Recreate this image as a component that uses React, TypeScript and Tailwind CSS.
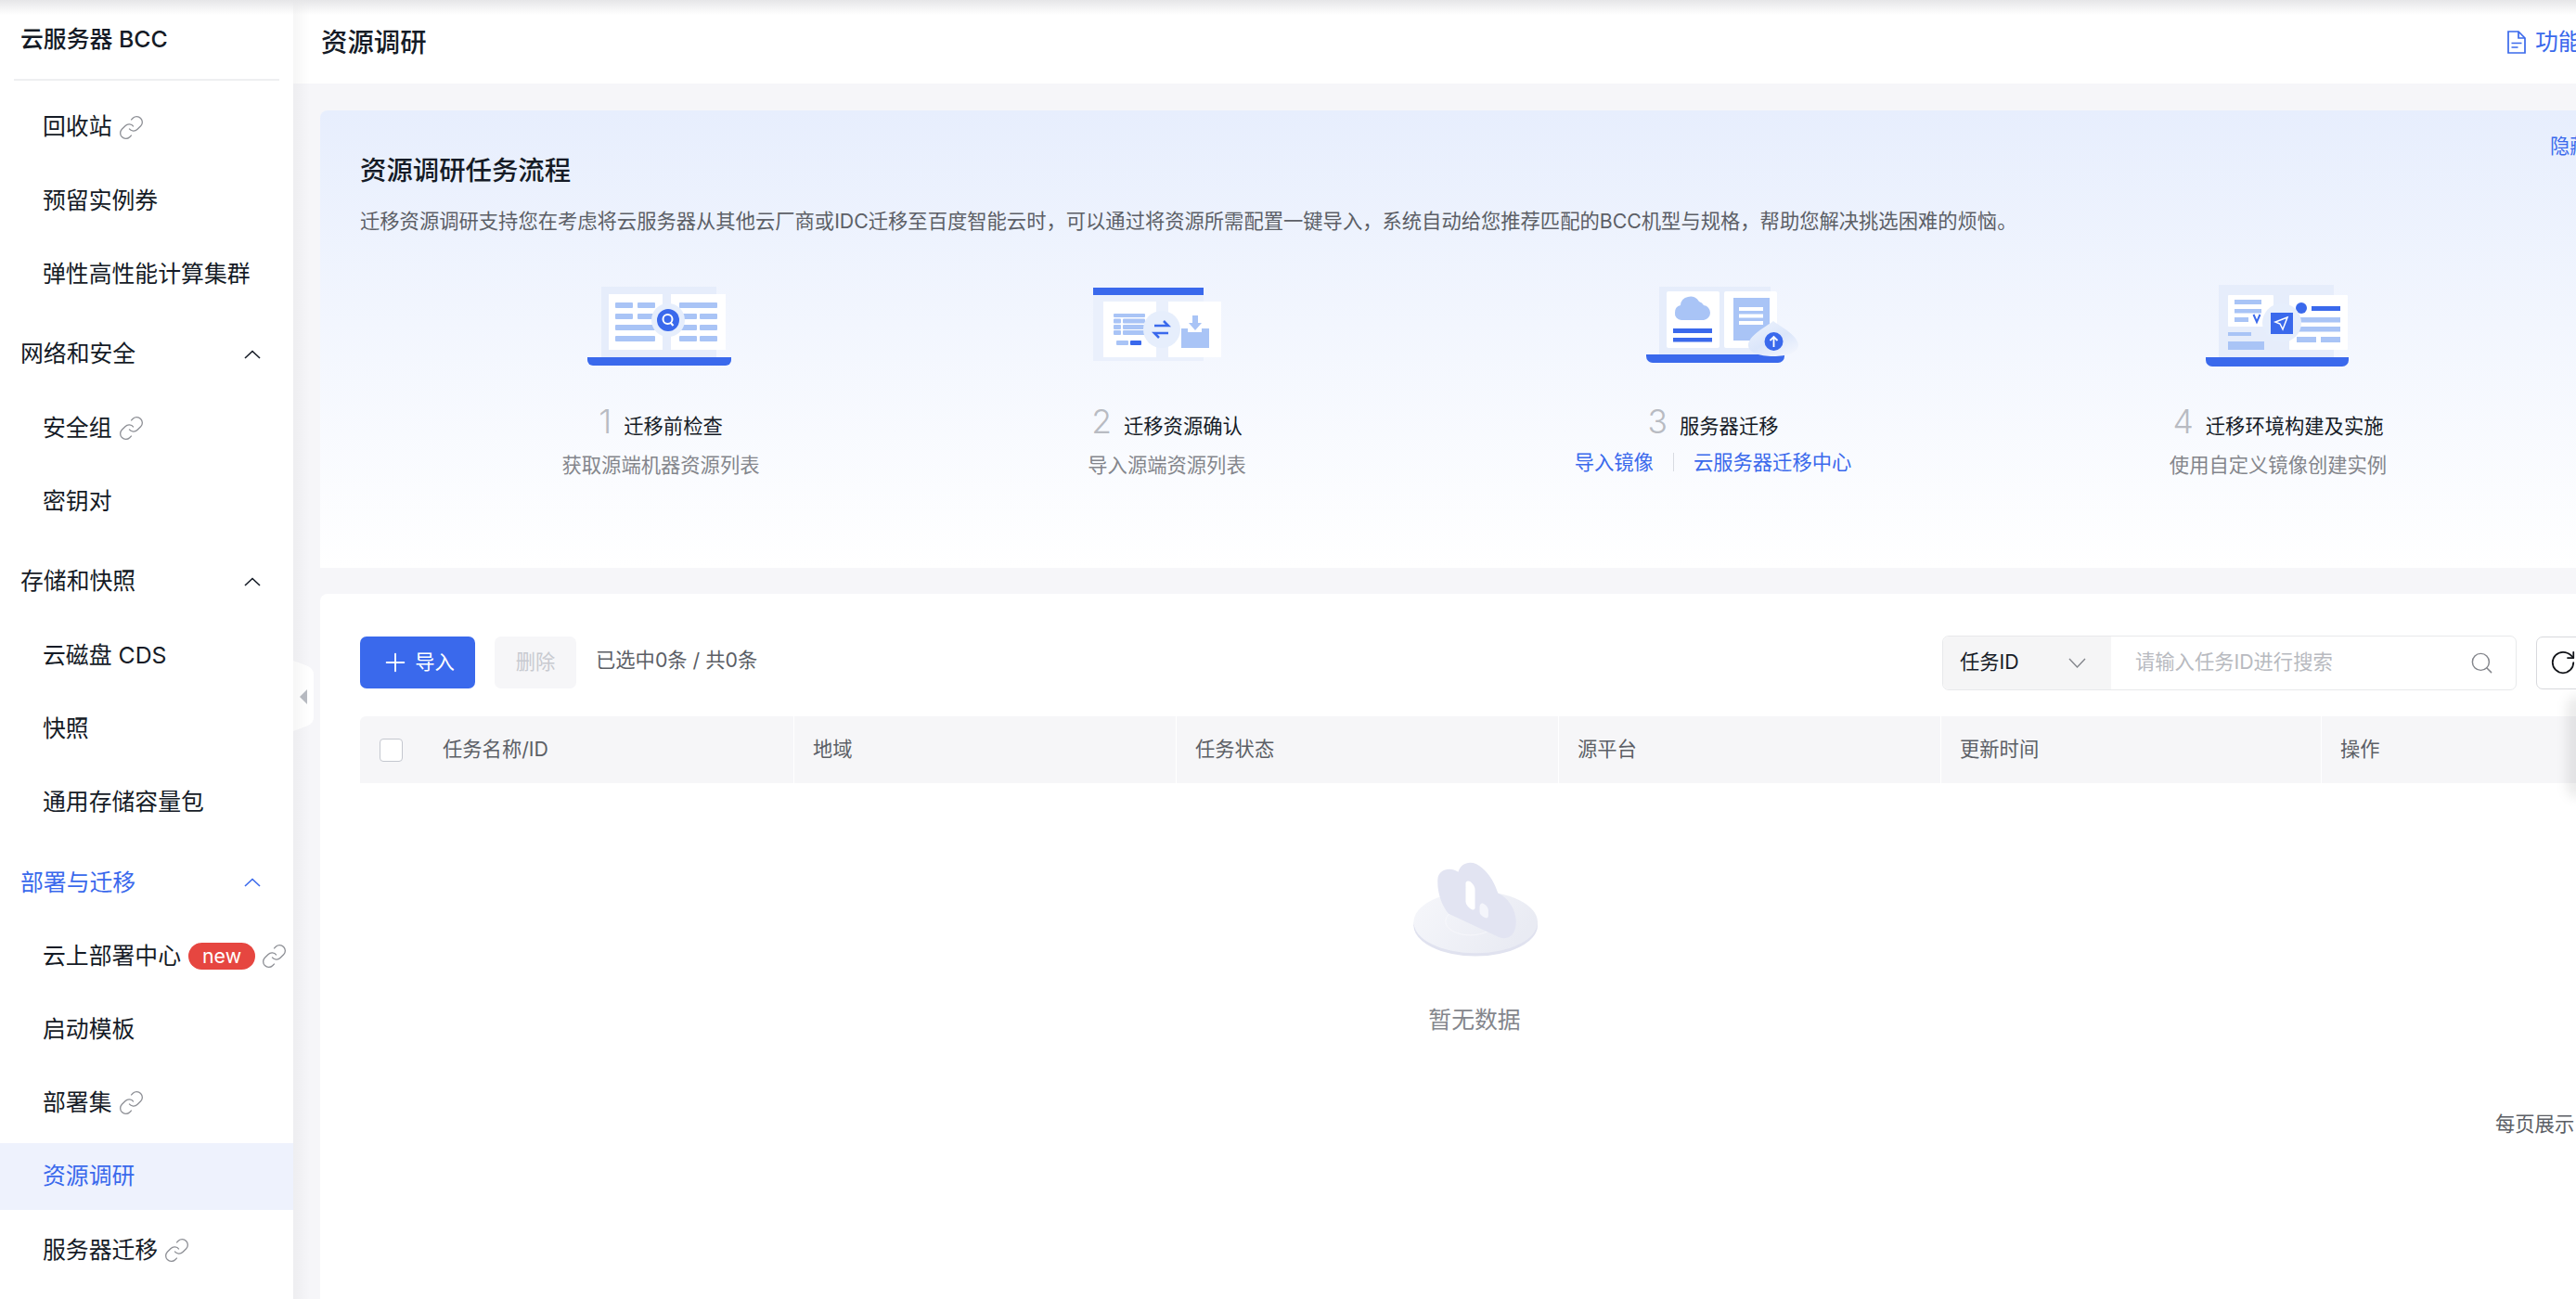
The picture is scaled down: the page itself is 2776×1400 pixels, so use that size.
import { Plus, RotateCw, Search } from 'lucide-react';

const LIGHT = '#a9c4f6';
const BLUE = '#3a69ec';
const PALE = '#e6edfb';

function LinkIcon() {
  return (
    <svg viewBox="1.5 1.5 21 21" className="w-[25px] h-[25px] shrink-0 text-[#8d8f95]" fill="none" stroke="currentColor" strokeWidth="1.1">
      <path d="M10 13a5 5 0 0 0 7.54.54l3-3a5 5 0 0 0-7.07-7.07l-1.72 1.71" />
      <path d="M14 11a5 5 0 0 0-7.54-.54l-3 3a5 5 0 0 0 7.07 7.07l1.71-1.71" />
    </svg>
  );
}

function Item({ label, link, active, badge }: { label: string; link?: boolean; active?: boolean; badge?: boolean }) {
  return (
    <div className={`h-[72px] flex items-center pl-[46px] gap-[8px] whitespace-nowrap ${active ? 'bg-[#eef2fd] text-[#3a69ec]' : 'text-[#151b26]'}`}>
      <span>{label}</span>
      {badge && <span className="h-[29px] w-[72px] rounded-full bg-[#e64640] text-white text-[21.3px] flex items-center justify-center">new</span>}
      {link && <LinkIcon />}
    </div>
  );
}

function Section({ label, active }: { label: string; active?: boolean }) {
  return (
    <div className={`h-[72px] mt-[7.5px] flex items-center justify-between pl-[22px] pr-[35px] ${active ? 'text-[#3a69ec]' : 'text-[#151b26]'}`}>
      <span>{label}</span>
      <svg viewBox="0 0 18 10" className="w-[18px] h-[10px]" fill="none" stroke="currentColor" strokeWidth="1.6">
        <path d="M1 9l8-7.5L17 9" />
      </svg>
    </div>
  );
}

function Sidebar() {
  return (
    <div className="w-[316px] shrink-0 bg-white text-[24.85px] overflow-hidden">
      <div className="mx-[15px] h-[87px] pl-[7px] flex items-center border-b-2 border-[#eeeff1] font-medium text-[#151b26] whitespace-nowrap">云服务器 BCC</div>
      <div className="flex flex-col gap-[7.2px] pt-[14px]">
        <Item label="回收站" link />
        <Item label="预留实例券" />
        <Item label="弹性高性能计算集群" />
        <Section label="网络和安全" />
        <Item label="安全组" link />
        <Item label="密钥对" />
        <Section label="存储和快照" />
        <Item label="云磁盘 CDS" />
        <Item label="快照" />
        <Item label="通用存储容量包" />
        <Section label="部署与迁移" active />
        <Item label="云上部署中心" badge link />
        <Item label="启动模板" />
        <Item label="部署集" link />
        <Item label="资源调研" active />
        <Item label="服务器迁移" link />
      </div>
    </div>
  );
}

function Step1Art() {
  return (
    <svg viewBox="605 306 214 92" className="w-[214px] h-[92px]">
      <rect x="648" y="310" width="124" height="77" fill={PALE} />
      <path d="M633 386h155v3a6 6 0 0 1-6 6H639a6 6 0 0 1-6-6z" fill={BLUE} />
      <rect x="656" y="318" width="58" height="60" fill="#fff" />
      <rect x="723" y="318" width="59" height="60" fill="#fff" />
      {[327, 339].map((y) => (
        <g key={y} fill={LIGHT}>
          <rect x="663" y={y} width="19" height="6" rx="1" />
          <rect x="687" y={y} width="19" height="6" rx="1" />
        </g>
      ))}
      <rect x="663" y="351" width="43" height="6" rx="1" fill={LIGHT} />
      <rect x="663" y="363" width="43" height="6" rx="1" fill={LIGHT} />
      <rect x="732" y="327" width="41" height="6" rx="1" fill={LIGHT} />
      {[339, 351, 363].map((y) => (
        <g key={y} fill={LIGHT}>
          <rect x="732" y={y} width="19" height="6" rx="1" />
          <rect x="754" y={y} width="19" height="6" rx="1" />
        </g>
      ))}
      <circle cx="720" cy="346" r="18" fill="#e6eefc" />
      <circle cx="720" cy="346" r="12" fill={BLUE} />
      <circle cx="719.5" cy="345" r="5" fill="none" stroke="#fff" strokeWidth="2" />
      <path d="M722.5 348.5l3 3.5" stroke="#fff" strokeWidth="2" />
    </svg>
  );
}

function Step2Art() {
  return (
    <svg viewBox="1172 306 171 92" className="w-[171px] h-[92px]">
      <rect x="1178" y="319" width="119" height="71" fill="#eaf0fc" />
      <path d="M1178 311h119v8h-119z" fill={BLUE} />
      <rect x="1189" y="326" width="57" height="60" fill="#fff" />
      <rect x="1259" y="326" width="57" height="60" fill="#fff" />
      <rect x="1200" y="339" width="34" height="4" rx="1" fill={LIGHT} />
      {[344.5, 351, 357].map((y) => (
        <g key={y} fill={LIGHT}>
          <rect x="1200" y={y} width="8" height="5" rx="1" />
          <rect x="1210" y={y} width="24" height="5" rx="1" />
        </g>
      ))}
      <rect x="1203" y="368" width="13" height="5" rx="1" fill={LIGHT} />
      <rect x="1218" y="368" width="12" height="5" rx="1" fill={BLUE} />
      <circle cx="1252" cy="356" r="20" fill="#e6eefc" />
      <path d="M1244 352h15l-5-5" fill="none" stroke={BLUE} strokeWidth="2.5" />
      <path d="M1259 360h-15l5 5" fill="none" stroke={BLUE} strokeWidth="2.5" />
      <path d="M1273 355h7v4h15v-4h8v21h-30z" fill={LIGHT} />
      <path d="M1285 341h6v8h4l-7 8-7-8h4z" fill={LIGHT} />
    </svg>
  );
}

function Step3Art() {
  return (
    <svg viewBox="1696 306 300 92" className="w-[300px] h-[92px]">
      <defs>
        <linearGradient id="drop" x1="0" y1="0" x2="0.7" y2="1">
          <stop offset="0" stopColor="#eef3fd" />
          <stop offset="0.6" stopColor="#dbe6fa" />
          <stop offset="1" stopColor="#f0f4fd" />
        </linearGradient>
      </defs>
      <rect x="1788" y="310" width="120" height="73" fill={PALE} />
      <path d="M1774 383h149v2a7 7 0 0 1-7 7h-135a7 7 0 0 1-7-7z" fill={BLUE} />
      <rect x="1796" y="315" width="57" height="61" rx="2" fill="#fff" />
      <rect x="1858" y="315" width="57" height="61" rx="2" fill="#fff" />
      <path d="M1812 346a7 7 0 0 1-7-8 8 8 0 0 1 6-8 9 9 0 0 1 8-9 10 10 0 0 1 12 5 9 9 0 0 1 5 4 8 8 0 0 1 7 8 8 8 0 0 1-7 8z" fill={LIGHT} />
      <rect x="1803" y="355" width="42" height="5" fill={BLUE} />
      <rect x="1803" y="365" width="42" height="4.5" fill={BLUE} />
      <rect x="1868" y="322" width="39" height="46" fill={LIGHT} />
      {[332, 339.5, 347].map((y) => (
        <rect key={y} x="1874" y={y} width="26" height="4" fill="#fff" />
      ))}
      <path d="M1911 347c8 6 27 16 27 26 0 8-12 12-27 12s-27-4-27-12c0-10 19-20 27-26z" fill="url(#drop)" />
      <circle cx="1911.5" cy="369" r="10" fill={BLUE} />
      <path d="M1911.5 375v-11M1907.5 368l4-4 4 4" fill="none" stroke="#fff" strokeWidth="1.8" />
    </svg>
  );
}

function Step4Art() {
  return (
    <svg viewBox="2337 306 236 92" className="w-[236px] h-[92px]">
      <rect x="2391" y="308" width="124" height="79" fill={PALE} />
      <path d="M2377 386h154v3a7 7 0 0 1-7 7h-140a7 7 0 0 1-7-7z" fill={BLUE} />
      <rect x="2401" y="319" width="49" height="34" rx="1" fill="#fff" />
      <rect x="2408" y="324" width="29" height="5" fill={LIGHT} />
      <rect x="2408" y="334" width="29" height="4.5" fill={LIGHT} />
      <rect x="2408" y="343" width="15" height="5" fill={LIGHT} />
      <path d="M2428.5 340l3.5 8 3.5-8" fill="none" stroke={BLUE} strokeWidth="2" />
      <rect x="2401" y="359" width="25" height="4" fill={LIGHT} />
      <rect x="2401" y="369" width="39" height="9" fill={LIGHT} />
      <rect x="2467" y="319" width="63" height="59" rx="1" fill="#fff" />
      <circle cx="2480" cy="333" r="6" fill={BLUE} />
      <rect x="2491" y="331" width="31" height="5" fill={BLUE} />
      <rect x="2477" y="343" width="45" height="5.5" fill={LIGHT} />
      <rect x="2477" y="353" width="45" height="5.5" fill={LIGHT} />
      <rect x="2475" y="364" width="21" height="6" fill={LIGHT} />
      <rect x="2501" y="364" width="21" height="6" fill={LIGHT} />
      <circle cx="2459" cy="349" r="21" fill="#e6eefc" />
      <rect x="2447" y="338" width="24" height="23" fill={BLUE} />
      <path d="M2465 343l-13 5 5 2 3 6z" fill="none" stroke="#fff" strokeWidth="1.5" />
    </svg>
  );
}

function EmptyArt() {
  return (
    <svg viewBox="180 75 410 320" className="w-[137px] h-[107px]">
      <defs>
        <linearGradient id="disc" x1="0" y1="0" x2="1" y2="0.4">
          <stop offset="0" stopColor="#f6f7fb" />
          <stop offset="1" stopColor="#e9ebf3" />
        </linearGradient>
      </defs>
      <ellipse cx="387" cy="285" rx="200" ry="100" fill="#e0e2ef" />
      <ellipse cx="387" cy="275" rx="200" ry="100" fill="url(#disc)" />
      <ellipse cx="370" cy="272" rx="80" ry="45" fill="none" stroke="#fafbfd" strokeWidth="2" />
      <path d="M265 135c2-30 40-40 66-22 10-35 50-40 78-12 25 22 40 50 50 80 35 15 62 60 58 100-2 35-25 55-55 42L300 248c-25-30-38-75-35-113z" fill="#e2e4f2" />
      <path d="M355 150c0-8 8-10 14-6 8 6 16 16 16 26v58c0 8-8 8-14 4-8-6-16-14-16-24z" fill="#fff" />
      <path d="M400 226c0-8 6-16 14-10 8 5 14 12 14 20v18c0 8-6 10-12 6-8-4-16-10-16-18z" fill="#f4f5fb" />
    </svg>
  );
}

function StepTitle({ n, title }: { n: number; title: string }) {
  return (
    <div className="mt-[38px] h-[40px] flex items-baseline justify-center gap-[13px] whitespace-nowrap">
      <span className="text-[35.5px] leading-[40px] font-light text-[#b8bbc2]">{n}</span>
      <span className="text-[#151b26]">{title}</span>
    </div>
  );
}

function Panel() {
  return (
    <div className="relative h-[493px] rounded-t-[8px] bg-gradient-to-b from-[#e7eefd] to-white pl-[43px] text-[21.3px]">
      <span className="absolute top-[23px] left-[2403px] leading-[30px] text-[#3a69ec] whitespace-nowrap">隐藏</span>
      <div className="pt-[45px] h-[85px] text-[28.4px] leading-[40px] font-medium text-[#151b26]">资源调研任务流程</div>
      <div className="mt-[19px] leading-[30px] text-[#5c5f66] whitespace-nowrap">
        迁移资源调研支持您在考虑将云服务器从其他云厂商或IDC迁移至百度智能云时，可以通过将资源所需配置一键导入，系统自动给您推荐匹配的BCC机型与规格，帮助您解决挑选困难的烦恼。
      </div>
      <div className="mt-[52px] ml-[217px] flex">
        <div className="w-[214px]">
          <Step1Art />
          <StepTitle n={1} title="迁移前检查" />
          <div className="mt-[11px] leading-[30px] text-center text-[#84868c]">获取源端机器资源列表</div>
        </div>
        <div className="w-[171px] ml-[353px]">
          <Step2Art />
          <StepTitle n={2} title="迁移资源确认" />
          <div className="mt-[11px] leading-[30px] text-center text-[#84868c] whitespace-nowrap">导入源端资源列表</div>
        </div>
        <div className="w-[300px] ml-[353px]">
          <Step3Art />
          <StepTitle n={3} title="服务器迁移" />
          <div className="mt-[8px] leading-[30px] flex items-center justify-center text-[#3a69ec] whitespace-nowrap">
            <span>导入镜像</span>
            <span className="mx-[21px] w-[1px] h-[20px] bg-[#d8dbe2]" />
            <span>云服务器迁移中心</span>
          </div>
        </div>
        <div className="w-[236px] ml-[341px]">
          <Step4Art />
          <StepTitle n={4} title="迁移环境构建及实施" />
          <div className="mt-[11px] leading-[30px] text-center text-[#84868c] whitespace-nowrap">使用自定义镜像创建实例</div>
        </div>
      </div>
    </div>
  );
}

function Th({ children }: { children: string }) {
  return <div className="flex items-center pl-[20px] border-l border-white">{children}</div>;
}

function TaskCard() {
  return (
    <div className="mt-[28px] h-[760px] bg-white rounded-t-[8px] pt-[44px] pl-[43px] pr-[44px] text-[21.3px] text-[#5c5f66]">
      <div className="h-[60px] flex items-center">
        <button className="w-[124px] h-[56px] rounded-[7px] bg-[#3a69ec] text-white flex items-center justify-center gap-[5px]">
          <Plus size={32} strokeWidth={1.4} />
          <span>导入</span>
        </button>
        <button className="ml-[21px] w-[88px] h-[56px] rounded-[7px] bg-[#f6f6f8] text-[#c8cad0]">删除</button>
        <span className="ml-[21px] pb-[4px] whitespace-nowrap">已选中0条 / 共0条</span>
        <div className="ml-auto w-[619px] h-[59px] flex rounded-[7px] border border-[#e8e9eb] overflow-hidden">
          <div className="w-[181px] shrink-0 bg-[#f5f5f6] flex items-center justify-between pl-[18px] pr-[27px] text-[#151b26]">
            <span>任务ID</span>
            <svg viewBox="0 0 19 11" className="w-[19px] h-[11px] text-[#84868c]" fill="none" stroke="currentColor" strokeWidth="1.4">
              <path d="M1 1l8.5 9L18 1" />
            </svg>
          </div>
          <div className="flex-1 flex items-center justify-between pl-[26px] pr-[23px] text-[#b8bac0]">
            <span className="whitespace-nowrap">请输入任务ID进行搜索</span>
            <Search size={27} strokeWidth={1.3} className="text-[#84868c]" />
          </div>
        </div>
        <div className="ml-[21px] w-[57px] h-[57px] shrink-0 rounded-[7px] border border-[#d8d9dd] flex items-center justify-center text-[#111318]">
          <RotateCw size={30} strokeWidth={1.4} />
        </div>
      </div>
      <div className="mt-[28px] h-[72px] grid grid-cols-[467px_412px_412px_412px_410px_288px] bg-[#f6f6f8] rounded-t-[6px]">
        <div className="flex items-center pl-[21px] gap-[43px]">
          <span className="w-[25px] h-[25px] rounded-[4px] bg-white border border-[#c4c7cf]" />
          <span>任务名称/ID</span>
        </div>
        <Th>地域</Th>
        <Th>任务状态</Th>
        <Th>源平台</Th>
        <Th>更新时间</Th>
        <Th>操作</Th>
      </div>
      <div className="pt-[83px] flex flex-col items-center">
        <EmptyArt />
        <div className="mt-[50px] text-[24.85px] leading-[30px] text-[#84868c]">暂无数据</div>
      </div>
      <div className="mt-[82px] ml-[2301px] leading-[30px] whitespace-nowrap">每页展示</div>
    </div>
  );
}

export default function App() {
  return (
    <div className="relative flex w-[2776px] h-[1400px] overflow-hidden bg-[#f6f6f9]" style={{ fontFamily: 'Inter, "Noto Sans CJK SC", sans-serif' }}>
      <Sidebar />
      <div className="flex-1 min-w-0 overflow-hidden">
        <div className="h-[90px] bg-white flex items-center justify-between pl-[30px] pt-[2px]">
          <span className="text-[28.4px] font-medium text-[#151b26]">资源调研</span>
          <div className="w-[74px] flex items-center gap-[10px] overflow-hidden whitespace-nowrap text-[24.85px] text-[#3a69ec]">
            <svg viewBox="0 0 20 25" className="w-[20px] h-[25px] shrink-0" fill="none" stroke="currentColor" strokeWidth="1.7">
              <path d="M1 1h11l7 7v16H1z" />
              <path d="M12 1v7h7M4.5 13.5h11M4.5 18h7" />
            </svg>
            <span>功能发布记录</span>
          </div>
        </div>
        <div className="pl-[29px] pt-[29px] w-[2518px]">
          <Panel />
          <TaskCard />
        </div>
      </div>

      {/* sidebar collapse tab */}
      <svg viewBox="0 0 24 80" className="absolute left-[316px] top-[710px] w-[24px] h-[80px]">
        <path d="M0 2l16 6c4 2 6 5 6 9v46c0 4-2 7-6 9L0 78z" fill="#fff" />
        <path d="M15 33v16L7 41z" fill="#b8bbc2" />
      </svg>
      {/* shadows along the top, the sidebar edge and the fixed table column */}
      <div className="absolute left-[316px] top-0 bottom-0 w-[18px] bg-gradient-to-r from-[#00000009] to-transparent pointer-events-none" />
      <div className="absolute inset-x-0 top-0 h-[16px] bg-gradient-to-b from-[#e6e6e8] to-transparent pointer-events-none" />
      <div className="absolute right-[-12px] top-[750px] w-[22px] h-[110px] rounded-full bg-[#00000014] blur-[6px] pointer-events-none" />
    </div>
  );
}
